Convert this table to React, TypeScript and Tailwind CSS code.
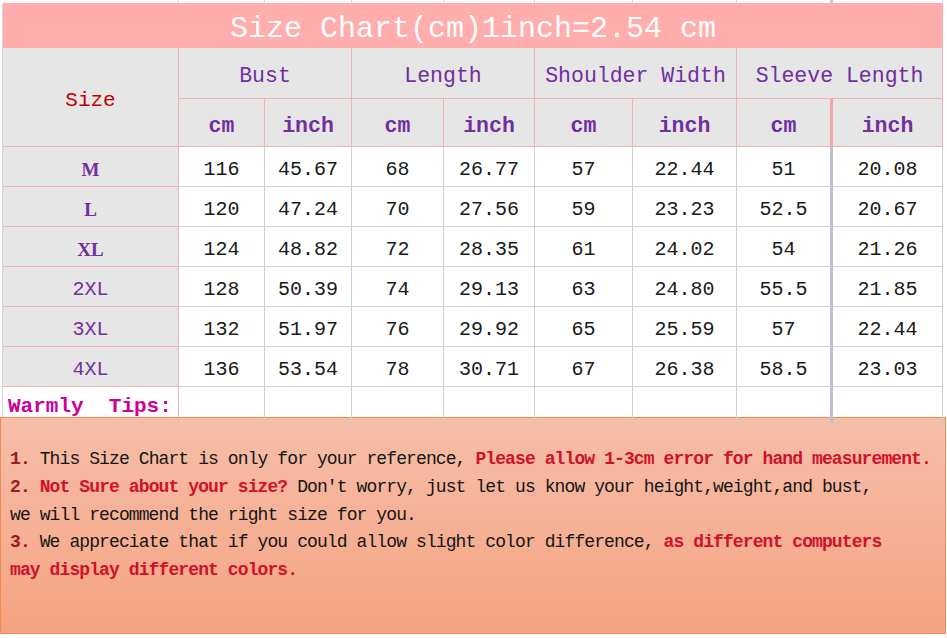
const cols = [176, 86, 87, 92, 91, 98, 104, 96, 110];

const rows = [
    { size: "M", bold: true, v: ["116", "45.67", "68", "26.77", "57", "22.44", "51", "20.08"] },
    { size: "L", bold: true, v: ["120", "47.24", "70", "27.56", "59", "23.23", "52.5", "20.67"] },
    { size: "XL", bold: true, v: ["124", "48.82", "72", "28.35", "61", "24.02", "54", "21.26"] },
    { size: "2XL", bold: false, v: ["128", "50.39", "74", "29.13", "63", "24.80", "55.5", "21.85"] },
    { size: "3XL", bold: false, v: ["132", "51.97", "76", "29.92", "65", "25.59", "57", "22.44"] },
    { size: "4XL", bold: false, v: ["136", "53.54", "78", "30.71", "67", "26.38", "58.5", "23.03"] },
];

const groups = ["Bust", "Length", "Shoulder Width", "Sleeve Length"];

const mono = "font-['Liberation_Mono',monospace]";
const grid = "grid grid-cols-[176px_86px_87px_92px_91px_98px_104px_96px_110px]";
const pinkCell = "flex items-center justify-center bg-[#e7e6e6] border-r border-b border-[#f3b2b2]";

export default function App() {
    return (
        <div className="w-[947px] h-[638px] bg-white overflow-hidden">
            {/* sheet grid stubs above the title */}
            <div className="flex h-[3px] pl-[3px]">
                {cols.map((w, i) => (
                    <div
                        key={i}
                        style={{ width: w }}
                        className={i === 7 ? "border-r-[3px] border-[#c3c8da]" : "border-r border-[#d6d8e2]"}
                    />
                ))}
            </div>

            <div className="flex">
                <div className="w-[3px] border-r border-[#d6d8e2]" />
                <div className="w-[940px]">
                    <div className={`h-[45px] flex items-center justify-center pt-[7px] bg-[#ffadad] text-white text-[30px] ${mono}`}>
                        Size Chart(cm)1inch=2.54 cm
                    </div>

                    {/* header */}
                    <div className={`${grid} grid-rows-[51px_48px] text-[#7030a0] ${mono}`}>
                        <div className={`${pinkCell} row-span-2 pt-[7px] text-[21px] text-[#c00000]`}>Size</div>
                        {groups.map((g) => (
                            <div key={g} className={`${pinkCell} col-span-2 pt-[7px] text-[21.5px]`}>
                                {g}
                            </div>
                        ))}
                        {groups.map((g, gi) =>
                            ["cm", "inch"].map((u, ui) => (
                                <div
                                    key={g + u}
                                    className={`${pinkCell} pt-[8px] text-[21.5px] font-bold ${
                                        gi === 3 && ui === 0 ? "border-r-[3px] border-r-[#f3a6a6]" : ""
                                    }`}
                                >
                                    {u}
                                </div>
                            ))
                        )}
                    </div>

                    {/* data rows */}
                    {rows.map((r) => (
                        <div key={r.size} className={`${grid} h-[40px]`}>
                            <div
                                className={`${pinkCell} pt-[7px] text-[#7030a0] ${
                                    r.bold
                                        ? "font-['Liberation_Serif',serif] font-bold text-[19px]"
                                        : `${mono} text-[20px]`
                                }`}
                            >
                                {r.size}
                            </div>
                            {r.v.map((v, i) => (
                                <div
                                    key={i}
                                    className={`flex items-center justify-center pt-[7px] bg-white border-b border-r border-[#cdd0de] text-[#1a1a1a] text-[20px] ${mono} ${
                                        i === 6 ? "border-r-[3px] border-r-[#bac0d5]" : ""
                                    }`}
                                >
                                    {v}
                                </div>
                            ))}
                        </div>
                    ))}

                    {/* tips row */}
                    <div className={`${grid} h-[30px]`}>
                        <div className={`flex items-center pl-[5px] pt-1 border-r border-[#f3b2b2] text-[#cc0099] text-[21px] font-bold whitespace-pre ${mono}`}>
                            Warmly  Tips:
                        </div>
                        {cols.slice(1).map((_, i) => (
                            <div
                                key={i}
                                className={`border-r border-[#cdd0de] ${i === 6 ? "border-r-[3px] border-r-[#bac0d5]" : ""}`}
                            />
                        ))}
                    </div>
                </div>
            </div>

            {/* notes box */}
            <div
                className={`w-[946px] h-[217px] border-[1.5px] border-[#f08c4e] bg-linear-to-b from-[#f6bea9] to-[#f5a381] pt-[28px] pl-[9px] text-[18px] leading-[27.8px] tracking-[-0.9px] text-[#151515] whitespace-nowrap ${mono}`}
            >
                <div>
                    <span className="text-[#9b1c22] font-bold">1.</span> This Size Chart is only for your reference,{" "}
                    <span className="text-[#d0112b] font-bold">Please allow 1-3cm error for hand measurement.</span>
                </div>
                <div>
                    <span className="text-[#9b1c22] font-bold">2.</span>{" "}
                    <span className="text-[#d0112b] font-bold">Not Sure about your size?</span> Don't worry, just let us know your height,weight,and bust,
                </div>
                <div>we will recommend the right size for you.</div>
                <div>
                    <span className="text-[#9b1c22] font-bold">3.</span> We appreciate that if you could allow slight color difference,{" "}
                    <span className="text-[#d0112b] font-bold">as different computers</span>
                </div>
                <div className="text-[#d0112b] font-bold">may display different colors.</div>
            </div>
        </div>
    );
}
